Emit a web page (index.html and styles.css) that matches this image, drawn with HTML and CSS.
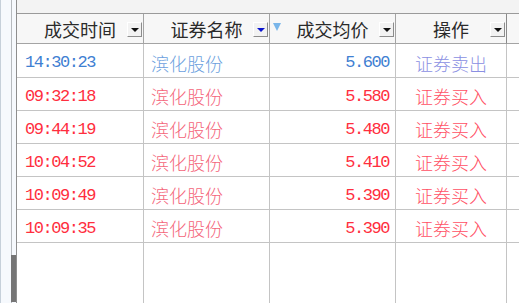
FILE: index.html
```html
<!DOCTYPE html>
<html lang="zh">
<head>
<meta charset="utf-8">
<link rel="stylesheet" href="styles.css">
</head>
<body>
<div class="window">
  <div class="side">
    <div class="side-pane"></div>
    <div class="side-track"><div class="side-thumb"></div></div>
  </div>
  <div class="table">
    <div class="band"></div>
    <div class="grid">
      <div class="hcell">成交时间<span class="drop"></span></div>
      <div class="hcell">证券名称<span class="drop drop-blue"></span></div>
      <div class="hcell"><span class="sort"></span>成交均价<span class="drop"></span></div>
      <div class="hcell hcell-last">操作<span class="drop"></span></div>
      <div class="hcell hcell-empty"></div>

      <div class="cell t blue-t">14:30:23</div>
      <div class="cell n blue-n">滨化股份</div>
      <div class="cell p blue-t">5.600</div>
      <div class="cell o blue-o">证券卖出</div>
      <div class="cell e"></div>

      <div class="cell t red-t">09:32:18</div>
      <div class="cell n red-n">滨化股份</div>
      <div class="cell p red-t">5.580</div>
      <div class="cell o red-o">证券买入</div>
      <div class="cell e"></div>

      <div class="cell t red-t">09:44:19</div>
      <div class="cell n red-n">滨化股份</div>
      <div class="cell p red-t">5.480</div>
      <div class="cell o red-o">证券买入</div>
      <div class="cell e"></div>

      <div class="cell t red-t">10:04:52</div>
      <div class="cell n red-n">滨化股份</div>
      <div class="cell p red-t">5.410</div>
      <div class="cell o red-o">证券买入</div>
      <div class="cell e"></div>

      <div class="cell t red-t">10:09:49</div>
      <div class="cell n red-n">滨化股份</div>
      <div class="cell p red-t">5.390</div>
      <div class="cell o red-o">证券买入</div>
      <div class="cell e"></div>

      <div class="cell t red-t">10:09:35</div>
      <div class="cell n red-n">滨化股份</div>
      <div class="cell p red-t">5.390</div>
      <div class="cell o red-o">证券买入</div>
      <div class="cell e"></div>

      <div class="fill"></div>
      <div class="fill"></div>
      <div class="fill"></div>
      <div class="fill"></div>
      <div class="fill fill-last"></div>
    </div>
  </div>
</div>
</body>
</html>
```

FILE: styles.css
```css
* { box-sizing: border-box; }
html, body { margin: 0; padding: 0; background: #ffffff; }
body { width: 519px; height: 303px; overflow: hidden; }

.window {
  display: flex;
  width: 519px;
  height: 303px;
}

.side {
  width: 16px;
  display: flex;
  border-left: 1px solid #c6d0da;
  background: #f6f9fd;
}
.side-pane { width: 10px; }
.side-track {
  width: 5px;
  border-left: 1px solid #b6babe;
  display: flex;
  flex-direction: column;
}
.side-thumb {
  margin-top: auto;
  margin-left: -1px;
  width: 5px;
  height: 47px;
  margin-bottom: 1px;
  background: #757575;
}

.table {
  flex: 1;
  display: flex;
  flex-direction: column;
  border-left: 1px solid #8e8e8e;
}
.band {
  height: 13px;
  background: #f3f3f3;
}
.grid {
  flex: 1;
  display: grid;
  grid-template-columns: 127px 126px 126px 111px 1fr;
  grid-template-rows: 30px 34px repeat(5, 33px) 1fr;
  border-top: 1px solid #9a9a9a;
}

.hcell {
  position: relative;
  display: flex;
  align-items: center;
  justify-content: center;
  background: #f7f7f7;
  border-right: 1px solid #a4a4a4;
  border-bottom: 1px solid #a4a4a4;
  font-family: "Noto Sans CJK SC", sans-serif;
  font-size: 18px;
  color: #2a2a2a;
  padding-top: 1px;
}
.hcell-last { border-right: 1px solid #8a8a8a; }
.hcell-empty { border-right: none; }

.drop {
  position: absolute;
  right: 1px;
  top: 8px;
  width: 15px;
  height: 15px;
  background: #f2f2f2;
  border-top: 1px solid #ffffff;
  border-left: 1px solid #ffffff;
  border-right: 1px solid #8c8c8c;
  border-bottom: 1px solid #8c8c8c;
}
.drop::after {
  content: "";
  position: absolute;
  left: 3px;
  top: 5px;
  border-left: 4px solid transparent;
  border-right: 4px solid transparent;
  border-top: 4px solid #111111;
}
.drop-blue::after { border-top-color: #0a14d0; }

.sort {
  position: absolute;
  left: 3px;
  top: 9px;
  border-left: 4px solid transparent;
  border-right: 4px solid transparent;
  border-top: 8px solid #7ab6ea;
}

.cell {
  display: flex;
  align-items: center;
  padding-top: 4px;
  border-right: 1px solid #c4c4c4;
  border-bottom: 1px solid #c4c4c4;
  background: #ffffff;
  white-space: nowrap;
}
.cell.e { border-right: none; }

.t, .p {
  font-family: "Liberation Mono", monospace;
  font-size: 17px;
  letter-spacing: -1.45px;
}
.t { padding-left: 8px; }
.p { justify-content: flex-end; padding-right: 6px; }
.n, .o {
  font-family: "Noto Sans CJK SC", sans-serif;
  font-size: 18px;
  font-weight: 300;
}
.n { padding-left: 7px; }
.o { justify-content: center; }

.blue-t { color: #3f80d2; }
.blue-n { color: #6c9fde; }
.blue-o { color: #8a8fe2; }
.red-t { color: #ff2e3e; }
.red-n { color: #f4657a; }
.red-o { color: #ff5064; }

.fill {
  border-right: 1px solid #c4c4c4;
  background: #ffffff;
}
.fill-last { border-right: none; }
```
